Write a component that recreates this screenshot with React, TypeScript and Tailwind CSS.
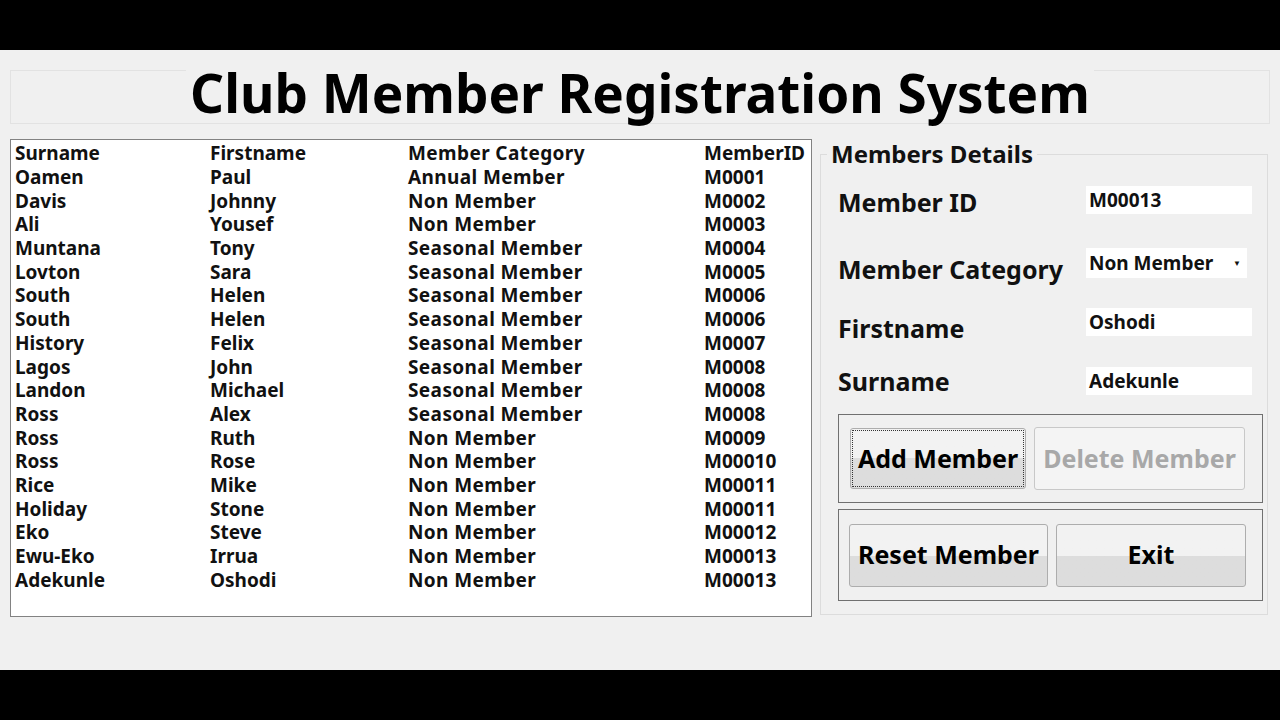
export default function App() {
  const rows = [
    ["Surname", "Firstname", "Member Category", "MemberID"],
    ["Oamen", "Paul", "Annual Member", "M0001"],
    ["Davis", "Johnny", "Non Member", "M0002"],
    ["Ali", "Yousef", "Non Member", "M0003"],
    ["Muntana", "Tony", "Seasonal Member", "M0004"],
    ["Lovton", "Sara", "Seasonal Member", "M0005"],
    ["South", "Helen", "Seasonal Member", "M0006"],
    ["South", "Helen", "Seasonal Member", "M0006"],
    ["History", "Felix", "Seasonal Member", "M0007"],
    ["Lagos", "John", "Seasonal Member", "M0008"],
    ["Landon", "Michael", "Seasonal Member", "M0008"],
    ["Ross", "Alex", "Seasonal Member", "M0008"],
    ["Ross", "Ruth", "Non Member", "M0009"],
    ["Ross", "Rose", "Non Member", "M00010"],
    ["Rice", "Mike", "Non Member", "M00011"],
    ["Holiday", "Stone", "Non Member", "M00011"],
    ["Eko", "Steve", "Non Member", "M00012"],
    ["Ewu-Eko", "Irrua", "Non Member", "M00013"],
    ["Adekunle", "Oshodi", "Non Member", "M00013"],
  ];
  const btn = "rounded-[3px] border border-[#adadad] bg-gradient-to-b from-[#f2f2f2] from-50% to-[#dddddd] to-50% text-[25px] font-bold text-black";
  return (
    <div className="flex h-[720px] w-[1280px] flex-col bg-black font-['Liberation_Sans']">
      <div className="h-[50px]" />
      <div className="flex h-[620px] flex-col bg-[#f0f0f0] px-[10px]">
        <div className="mt-[20px] flex h-[54px] items-start justify-center border border-[#e2e2e2]">
          <div className="mt-[-8px] bg-[#f0f0f0] px-1 text-[53px] font-bold leading-[60px] text-black">Club Member Registration System</div>
        </div>
        <div className="mt-[15px] flex gap-[8px]">
          <div className="h-[478px] w-[802px] border border-[#828282] bg-white pl-[4px] pt-[2px]">
            {rows.map((r, i) => (
              <div key={i} className="flex h-[23.7px] items-center text-[19px] font-bold leading-none text-[#111]">
                <span className="w-[195px]">{r[0]}</span>
                <span className="w-[198px]">{r[1]}</span>
                <span className="w-[296px] tracking-[0.4px]">{r[2]}</span>
                <span>{r[3]}</span>
              </div>
            ))}
          </div>
          <div className="relative mt-[15px] h-[461px] w-[448px] border border-[#dcdcdc]">
            <div className="absolute left-[6px] top-[-13px] bg-[#f0f0f0] px-[4px] text-[24px] font-bold leading-none text-[#111]">Members Details</div>
            <div className="flex flex-col pl-[17px] pr-[15px] pt-[31px] text-[25px] font-bold text-[#111]">
              <div className="flex h-[28px] items-center justify-between">
                <span className="mt-[6px]">Member ID</span>
                <div className="flex h-[28px] w-[166px] items-center bg-white pl-[3px] text-[19px]">M00013</div>
              </div>
              <div className="mt-[34px] flex h-[30px] items-center justify-between">
                <span className="mt-[14px]">Member Category</span>
                <div className="mr-[5px] flex h-[30px] w-[161px] items-center justify-between bg-white pl-[3px] pr-[6px] text-[19px]">
                  <span>Non Member</span>
                  <span className="text-[8px]">▼</span>
                </div>
              </div>
              <div className="mt-[30px] flex h-[28px] items-center justify-between">
                <span className="mt-[14px]">Firstname</span>
                <div className="flex h-[28px] w-[166px] items-center bg-white pl-[3px] text-[19px]">Oshodi</div>
              </div>
              <div className="mt-[31px] flex h-[28px] items-center justify-between">
                <span className="mt-[2px]">Surname</span>
                <div className="flex h-[28px] w-[166px] items-center bg-white pl-[3px] text-[19px]">Adekunle</div>
              </div>
              <div className="mt-[19px] flex h-[89px] w-[425px] items-center gap-[8px] border border-[#707070] pl-[11px]">
                <button className={btn + " h-[61px] w-[176px] border-[#3c7fb1] outline-1 outline-dotted outline-offset-[-3px] outline-[#333] from-[#eaf6fd] to-[#cfe4f1]"}>Add Member</button>
                <button className="h-[63px] w-[211px] rounded-[3px] border border-[#c8c8c8] bg-[#f4f4f4] text-[25px] font-bold text-[#a8a8a8]">Delete Member</button>
              </div>
              <div className="mt-[6px] flex h-[92px] w-[425px] items-center gap-[8px] border border-[#707070] pl-[10px]">
                <button className={btn + " h-[63px] w-[199px]"}>Reset Member</button>
                <button className={btn + " h-[63px] w-[190px]"}>Exit</button>
              </div>
            </div>
          </div>
        </div>
      </div>
      <div className="h-[50px]" />
    </div>
  );
}
